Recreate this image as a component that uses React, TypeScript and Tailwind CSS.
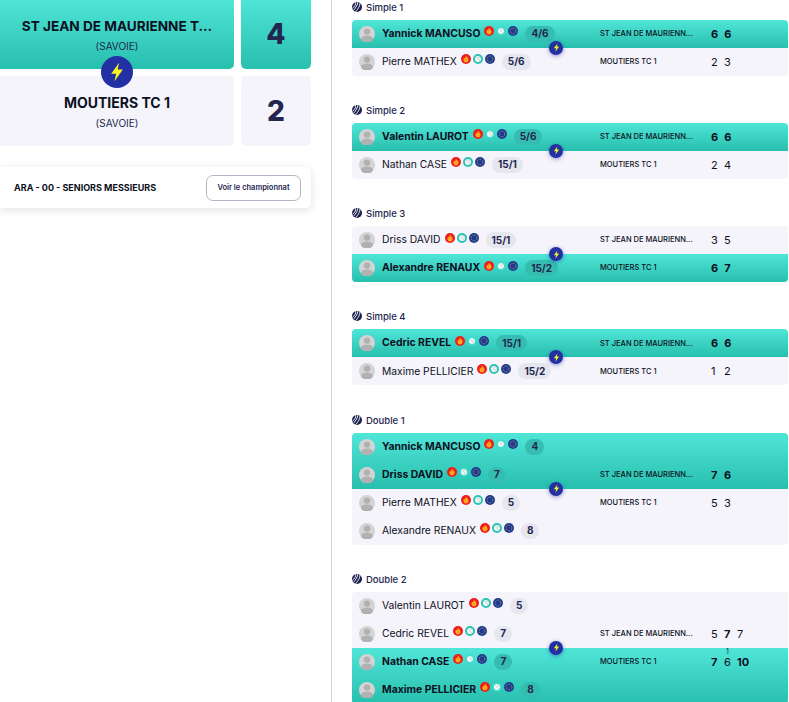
import React from 'react';

type Team = {
  win: boolean;
  players: { name: string; rank: string }[];
  club: string;
  clubRow: number;
  scores: { v: string; bold?: boolean; tb?: string }[];
};

const STJ = 'ST JEAN DE MAURIENN...';
const MOU = 'MOUTIERS TC 1';
const sc = (vals: string[], bold: boolean) => vals.map((v) => ({ v, bold }));

const matches: { title: string; teams: Team[] }[] = [
  {
    title: 'Simple 1',
    teams: [
      { win: true, players: [{ name: 'Yannick MANCUSO', rank: '4/6' }], club: STJ, clubRow: 0, scores: sc(['6', '6'], true) },
      { win: false, players: [{ name: 'Pierre MATHEX', rank: '5/6' }], club: MOU, clubRow: 0, scores: sc(['2', '3'], false) },
    ],
  },
  {
    title: 'Simple 2',
    teams: [
      { win: true, players: [{ name: 'Valentin LAUROT', rank: '5/6' }], club: STJ, clubRow: 0, scores: sc(['6', '6'], true) },
      { win: false, players: [{ name: 'Nathan CASE', rank: '15/1' }], club: MOU, clubRow: 0, scores: sc(['2', '4'], false) },
    ],
  },
  {
    title: 'Simple 3',
    teams: [
      { win: false, players: [{ name: 'Driss DAVID', rank: '15/1' }], club: STJ, clubRow: 0, scores: sc(['3', '5'], false) },
      { win: true, players: [{ name: 'Alexandre RENAUX', rank: '15/2' }], club: MOU, clubRow: 0, scores: sc(['6', '7'], true) },
    ],
  },
  {
    title: 'Simple 4',
    teams: [
      { win: true, players: [{ name: 'Cedric REVEL', rank: '15/1' }], club: STJ, clubRow: 0, scores: sc(['6', '6'], true) },
      { win: false, players: [{ name: 'Maxime PELLICIER', rank: '15/2' }], club: MOU, clubRow: 0, scores: sc(['1', '2'], false) },
    ],
  },
  {
    title: 'Double 1',
    teams: [
      {
        win: true,
        players: [{ name: 'Yannick MANCUSO', rank: '4' }, { name: 'Driss DAVID', rank: '7' }],
        club: STJ,
        clubRow: 1,
        scores: sc(['7', '6'], true),
      },
      {
        win: false,
        players: [{ name: 'Pierre MATHEX', rank: '5' }, { name: 'Alexandre RENAUX', rank: '8' }],
        club: MOU,
        clubRow: 0,
        scores: sc(['5', '3'], false),
      },
    ],
  },
  {
    title: 'Double 2',
    teams: [
      {
        win: false,
        players: [{ name: 'Valentin LAUROT', rank: '5' }, { name: 'Cedric REVEL', rank: '7' }],
        club: STJ,
        clubRow: 1,
        scores: [{ v: '5' }, { v: '7', bold: true }, { v: '7' }],
      },
      {
        win: true,
        players: [{ name: 'Nathan CASE', rank: '7' }, { name: 'Maxime PELLICIER', rank: '8' }],
        club: MOU,
        clubRow: 0,
        scores: [{ v: '7', bold: true }, { v: '6', tb: '1' }, { v: '10', bold: true }],
      },
    ],
  },
];

const Bolt = ({ size }: { size: number }) => (
  <svg width={size} height={size} viewBox="0 0 24 24" fill="#f5f51e">
    <path d="M14.5 1 5 14h6l-2 9 10-14h-6.2z" />
  </svg>
);

const Avatar = () => (
  <svg width="16" height="16" viewBox="0 0 16 16" className="shrink-0">
    <circle cx="8" cy="8" r="8" fill="#d4d4d4" />
    <circle cx="8" cy="5.6" r="3.2" fill="#b1b1b1" />
    <ellipse cx="8" cy="13" rx="6" ry="3.4" fill="#b1b1b1" />
  </svg>
);

const BallIcon = () => (
  <svg width="10" height="10" viewBox="0 0 10 10" className="shrink-0">
    <circle cx="5" cy="5" r="5" fill="#1d1f4f" />
    <path d="M3.6.2C4 2.4 2.8 4.4.4 6.4M8 1C8 4 6 7 3.6 9.8M5.8.2C5.8 2.6 4 5.4 1.4 8.4" stroke="#fff" strokeWidth=".9" fill="none" />
  </svg>
);

const StatusIcons = ({ win }: { win: boolean }) => (
  <span className="ml-[4px] mb-[5px] flex items-center gap-[2px]">
    <svg width="10" height="10" viewBox="0 0 10 10">
      <circle cx="5" cy="5" r="5" fill="#ee1c1c" />
      <path d="M5 1.4C5.6 3 7.6 3.8 7.6 5.8 7.6 7.4 6.4 8.5 5 8.5S2.4 7.4 2.4 5.8C2.4 4.8 3 4.2 3.5 3.6 3.7 4.2 4 4.5 4.3 4.6 4.4 3.5 4.5 2.4 5 1.4Z" fill="#ffa51f" />
    </svg>
    <svg width="10" height="10" viewBox="0 0 10 10">
      <circle cx="5" cy="5" r={win ? 4.6 : 5} fill={win ? '#3fdccb' : '#2cc4b4'} />
      <circle cx="5" cy="5" r="3" fill="#f4f8f8" />
      <path d="M3.4 2.8 6.8 7M5.6 2.2 7.6 4.4" stroke="#9fb5b5" strokeWidth=".6" />
    </svg>
    <svg width="10" height="10" viewBox="0 0 10 10">
      <circle cx="5" cy="5" r="5" fill="#1f3a93" />
      <circle cx="5" cy="5" r="2.9" fill="none" stroke="#e2c93a" strokeWidth=".7" strokeDasharray=".8 .9" />
    </svg>
  </span>
);

const Row = ({ team, index }: { team: Team; index: number }) => {
  const p = team.players[index];
  const showClub = team.clubRow === index;
  return (
    <div className="flex h-[28px] items-center pl-[7px] text-[#0d1022]">
      <div className="flex w-[241px] shrink-0 items-center">
        <Avatar />
        <span className={`ml-[7px] whitespace-nowrap ${team.win ? 'text-[10.4px] font-bold' : 'text-[10.3px]'}`}>{p.name}</span>
        <StatusIcons win={team.win} />
        <span
          className={`ml-[7px] flex h-[16px] min-w-[18px] items-center justify-center rounded-full px-[6px] text-[10px] font-bold text-[#23264f] ${
            team.win ? 'bg-[#35bdb0]' : 'bg-[#e6e6ee]'
          }`}
        >
          {p.rank}
        </span>
      </div>
      {showClub && (
        <>
          <span className="w-[111px] shrink-0 whitespace-nowrap text-[7.5px] font-medium">{team.club}</span>
          <div className="flex gap-[6px] text-[11px] leading-[14px]">
            {team.scores.map((s, i) => (
              <span key={i} className={`relative min-w-[7px] ${s.bold ? 'font-bold' : ''}`}>
                {s.v}
                {s.tb && <span className="absolute -top-[7px] left-[2px] text-[7px] leading-[7px] text-[#23264f]">{s.tb}</span>}
              </span>
            ))}
          </div>
        </>
      )}
    </div>
  );
};

const Match = ({ title, teams }: { title: string; teams: Team[] }) => (
  <section>
    <div className="flex h-[19px] items-start gap-[4px] pl-[1px] pt-[1px] text-[9.5px] font-medium leading-[11px] text-[#23264f]">
      <BallIcon />
      <span>{title}</span>
    </div>
    <div className="relative ml-[1px]">
      {teams.map((team, t) => (
        <div
          key={t}
          className={`${team.win ? 'bg-gradient-to-b from-[#4fe6d8] to-[#27bfae]' : 'bg-[#f5f4fb]'} ${
            t === 0 ? 'rounded-t-[4px]' : 'rounded-b-[4px]'
          }`}
        >
          {team.players.map((_, i) => (
            <Row key={i} team={team} index={i} />
          ))}
        </div>
      ))}
      <span className="absolute left-[197px] top-1/2 flex h-[14px] w-[14px] -translate-y-1/2 items-center justify-center rounded-full bg-[#2330a3] shadow-[0_1px_4px_rgba(35,48,163,.5)]">
        <Bolt size={9} />
      </span>
    </div>
  </section>
);

export default function App() {
  return (
    <div className="flex h-[702px] w-[789px] overflow-hidden bg-white font-['Inter',sans-serif]">
      <aside className="h-full w-[332px] shrink-0 border-r border-[#d5d5d8] pr-[20px]">
        <div className="relative -mt-[2px] flex flex-col gap-[7px]">
          <div className="flex gap-[7px]">
            <div className="flex h-[71px] w-[234px] flex-col items-center justify-center rounded-br-[5px] bg-gradient-to-b from-[#4fe6d8] to-[#27bfae] pt-[2px]">
              <span className="text-[13.6px] font-bold leading-[22px] text-[#0d1022]">ST JEAN DE MAURIENNE T...</span>
              <span className="text-[10px] leading-[18px] text-[#23264f]">(SAVOIE)</span>
            </div>
            <div className="flex h-[71px] flex-1 items-center justify-center rounded-b-[5px] bg-gradient-to-b from-[#4fe6d8] to-[#27bfae] text-[28px] font-extrabold text-[#23264f]">
              4
            </div>
          </div>
          <div className="flex gap-[7px]">
            <div className="flex h-[70px] w-[234px] flex-col items-center justify-center rounded-r-[5px] bg-[#f5f4fb] pt-[1px]">
              <span className="text-[14px] font-bold leading-[22px] text-[#0d1022]">MOUTIERS TC 1</span>
              <span className="text-[10px] leading-[18px] text-[#23264f]">(SAVOIE)</span>
            </div>
            <div className="flex h-[70px] flex-1 items-center justify-center rounded-[5px] bg-[#f5f4fb] text-[28px] font-extrabold text-[#23264f]">
              2
            </div>
          </div>
          <span className="absolute left-[101px] top-[58px] flex h-[32px] w-[32px] items-center justify-center rounded-full bg-[#2330a3]">
            <Bolt size={20} />
          </span>
        </div>
        <div className="mt-[21px] flex h-[41px] items-center justify-between rounded-r-[5px] bg-white pl-[14px] pr-[10px] shadow-[0_2px_8px_rgba(30,30,80,.13)]">
          <span className="text-[9px] font-bold text-[#0d1022]">ARA - 00 - SENIORS MESSIEURS</span>
          <button className="h-[26px] w-[95px] rounded-[7px] border border-[#b5b3c5] text-[7.5px] font-semibold text-[#23264f]">
            Voir le championnat
          </button>
        </div>
      </aside>
      <main className="flex w-[456px] shrink-0 flex-col gap-[28.25px] pl-[19px] pt-[0.5px]">
        {matches.map((m) => (
          <Match key={m.title} title={m.title} teams={m.teams} />
        ))}
      </main>
    </div>
  );
}
